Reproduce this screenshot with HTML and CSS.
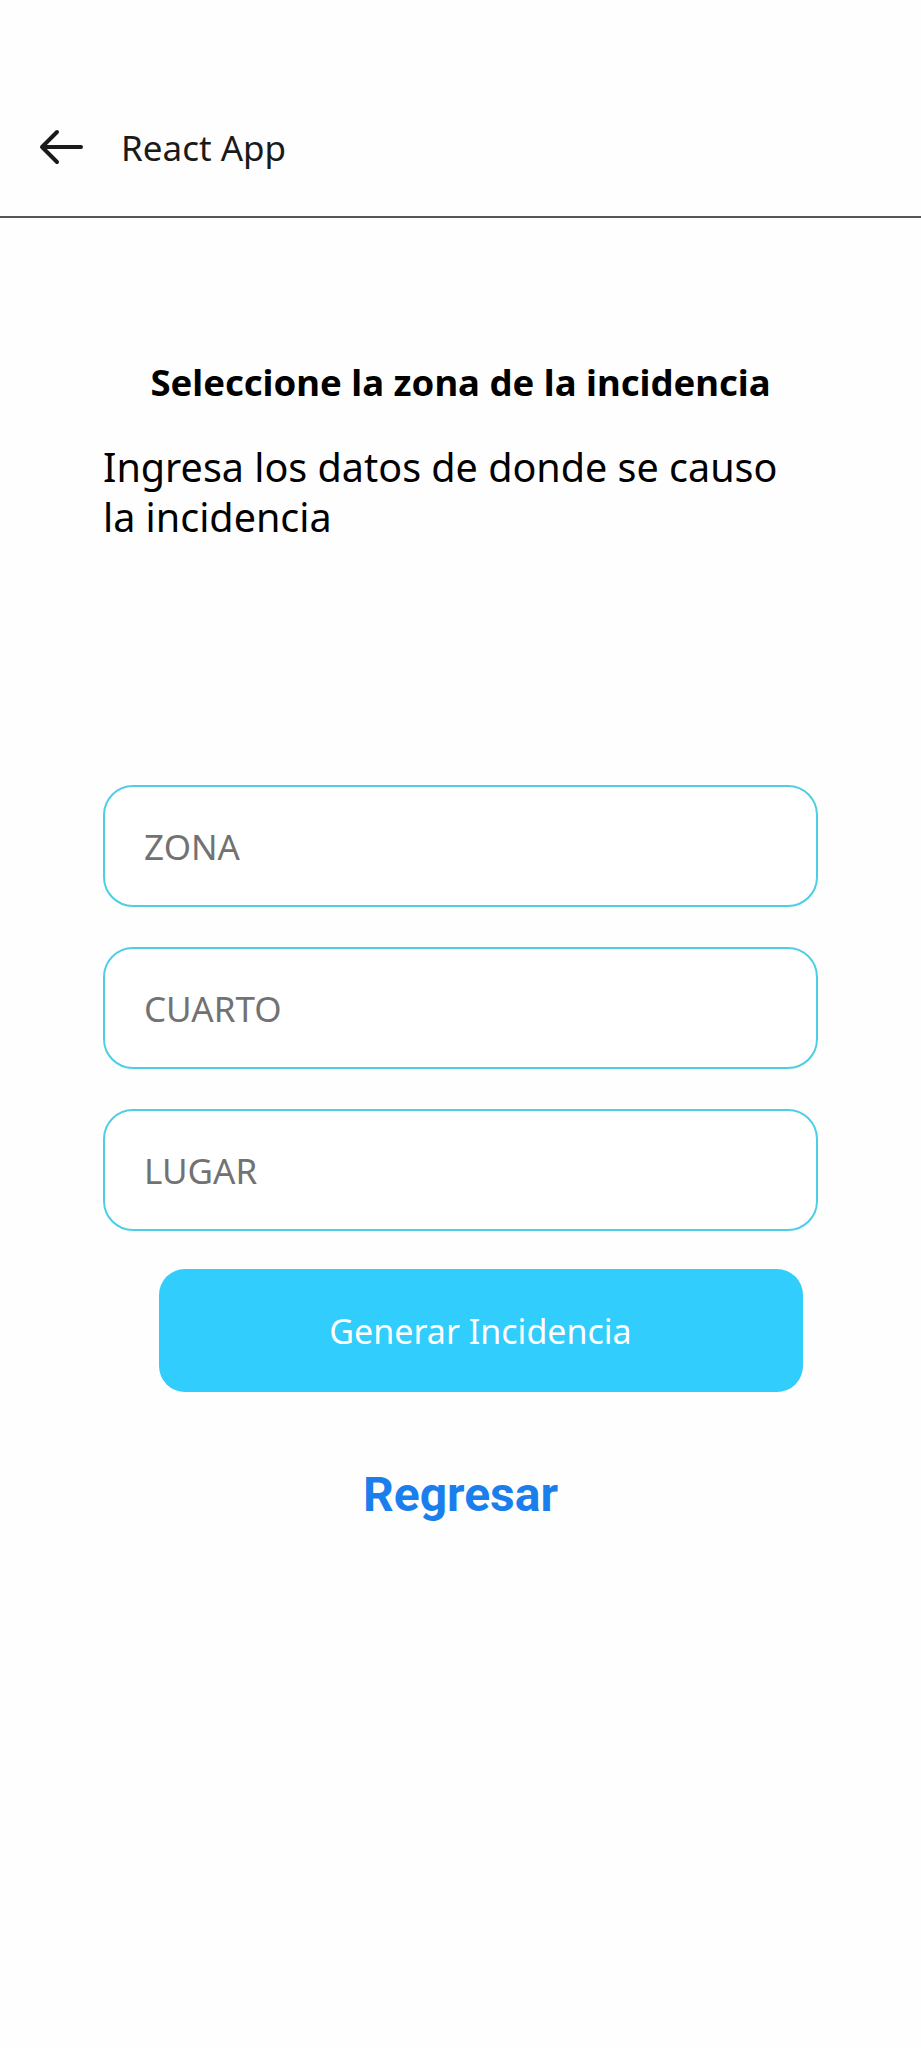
FILE: index.html
```html
<!DOCTYPE html>
<html lang="es">
<head>
<meta charset="utf-8">
<title>React App</title>
<link rel="stylesheet" href="styles.css">
</head>
<body>
<header class="topbar">
  <svg class="back" width="48" height="40" viewBox="0 0 48 40" aria-hidden="true">
    <path d="M44 20 H5 M20 5 L5 20 L20 35" fill="none" stroke="#1a1a1a" stroke-width="4" stroke-linecap="round" stroke-linejoin="round"/>
  </svg>
  <span class="app-title">React App</span>
</header>
<main class="content">
  <h1 class="title">Seleccione la zona de la incidencia</h1>
  <p class="lead">Ingresa los datos de donde se causo la incidencia</p>
  <form class="form">
    <input class="field" type="text" placeholder="ZONA">
    <input class="field" type="text" placeholder="CUARTO">
    <input class="field" type="text" placeholder="LUGAR">
    <button class="submit" type="button">Generar Incidencia</button>
  </form>
  <a class="back-link" href="#">Regresar</a>
</main>
</body>
</html>
```
FILE: styles.css
```css
* { box-sizing: border-box; }
html, body { margin: 0; padding: 0; background: #fefefe; }
body { font-family: "Noto Sans", "Liberation Sans", sans-serif; color: #000; }

.topbar {
  height: 218px;
  border-bottom: 2px solid #555;
  display: flex;
  align-items: center;
  padding: 78px 0 0 37px;
}
.back { display: block; }
.app-title {
  margin-left: 36px;
  font-size: 35px;
  color: #1a1a1a;
}

.content {
  display: flex;
  flex-direction: column;
  align-items: center;
  padding: 0 103px;
}
.title {
  margin: 142px 0 0;
  font-size: 36.5px;
  font-weight: 700;
  text-align: center;
  line-height: 44px;
  white-space: nowrap;
}
.lead {
  align-self: stretch;
  margin: 38px 0 0;
  font-size: 39.5px;
  line-height: 50px;
  padding-right: 20px;
}
.form {
  align-self: stretch;
  display: flex;
  flex-direction: column;
  gap: 40px;
  margin-top: 243px;
}
.field {
  height: 122px;
  border: 2.5px solid #4ccfe5;
  border-radius: 30px;
  padding: 0 39px;
  font-family: inherit;
  font-size: 35px;
  background: #fff;
  outline: none;
}
.field::placeholder { color: #727272; }
.submit {
  align-self: center;
  width: 644px;
  height: 123px;
  margin: 0 0 0 40px;
  border: 0;
  border-radius: 26px;
  background: #30cdfd;
  color: #fff;
  font-family: inherit;
  font-size: 34px;
  position: relative;
  top: -2px;
}
.back-link {
  margin-top: 72px;
  font-family: Roboto, "Liberation Sans", sans-serif;
  font-weight: 700;
  font-size: 48px;
  color: #1a7fec;
  text-decoration: none;
}
```
